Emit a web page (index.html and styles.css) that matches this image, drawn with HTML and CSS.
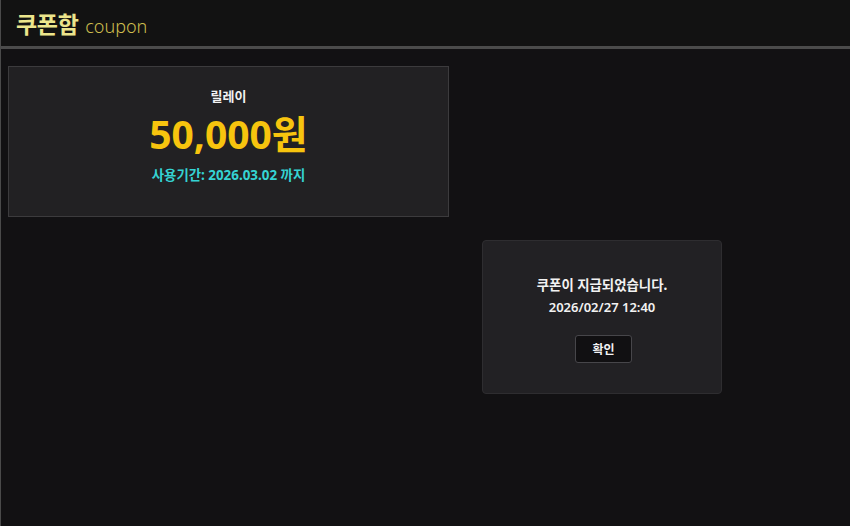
FILE: index.html
```html
<!DOCTYPE html>
<html lang="ko">
<head>
    <meta charset="UTF-8">
    <meta name="viewport" content="width=device-width, initial-scale=1.0">
    <title>쿠폰함</title>
    <link rel="stylesheet" href="styles.css">
</head>
<body>

<div class="page">
    <header class="top-bar">
        <h1>쿠폰함 <span>coupon</span></h1>
    </header>

    <section class="coupon-list">
        <div class="coupon-card">
            <p class="coupon-name">릴레이</p>
            <p class="coupon-amount">50,000원</p>
            <p class="coupon-expire">사용기간: 2026.03.02 까지</p>
        </div>
    </section>

    <div class="dialog">
        <p class="dialog-msg">쿠폰이 지급되었습니다.</p>
        <p class="dialog-time">2026/02/27 12:40</p>
        <button class="btn-ok">확인</button>
    </div>
</div>

</body>
</html>
```

FILE: styles.css
```css
:root {
    --bg: #121113;
    --card: #222123;
    --yellow: #f7c40e;
    --title: #ece58c;
    --cyan: #35d3d3;
    --white: #f2f2f2;
}
body {
    margin: 0;
    background: var(--bg);
    font-family: "Noto Sans", "Noto Sans CJK KR", sans-serif;
    color: var(--white);
}
.page {
    position: relative;
    min-height: 526px;
    border-left: 1px solid #4a4a4a;
    box-sizing: border-box;
}
p { margin: 0; }
.top-bar {
    height: 46px;
    background: #121212;
    border-bottom: 3px solid #4b4b4b;
    padding: 0 15px;
    display: flex;
    align-items: center;
}
.top-bar h1 {
    margin: 0;
    font-size: 23px;
    font-weight: 700;
    color: var(--title);
    letter-spacing: -0.3px;
}
.top-bar h1 span {
    font-size: 18px;
    font-weight: 300;
    color: #cdbd4e;
    letter-spacing: 0;
    margin-left: 1px;
}
.coupon-list { padding: 17px 7px; }
.coupon-card {
    width: 441px;
    height: 151px;
    box-sizing: border-box;
    background: var(--card);
    border: 1px solid #3c3b3d;
    text-align: center;
    padding-top: 18px;
}
.coupon-name { font-size: 13px; font-weight: 700; line-height: 22px; }
.coupon-amount {
    font-size: 39px;
    font-weight: 700;
    color: var(--yellow);
    line-height: 50px;
    margin-top: 2px;
}
.coupon-expire {
    font-size: 13.4px;
    font-weight: 700;
    color: var(--cyan);
    line-height: 22px;
    margin-top: 5px;
}
.dialog {
    position: absolute;
    left: 481px;
    top: 240px;
    width: 240px;
    height: 154px;
    box-sizing: border-box;
    background: #222124;
    border: 1px solid #2e2d30;
    border-radius: 4px;
    text-align: center;
    padding-top: 33px;
}
.dialog-msg { font-size: 13.4px; font-weight: 700; line-height: 22px; }
.dialog-time { font-size: 13px; font-weight: 600; line-height: 20px; margin-top: 1px; }
.btn-ok {
    margin-top: 18px;
    margin-left: 3px;
    width: 57px;
    height: 28px;
    background: #111012;
    color: var(--white);
    border: 1px solid #47464a;
    border-radius: 3px;
    font-family: inherit;
    font-size: 12px;
    font-weight: 700;
    cursor: pointer;
}
```
